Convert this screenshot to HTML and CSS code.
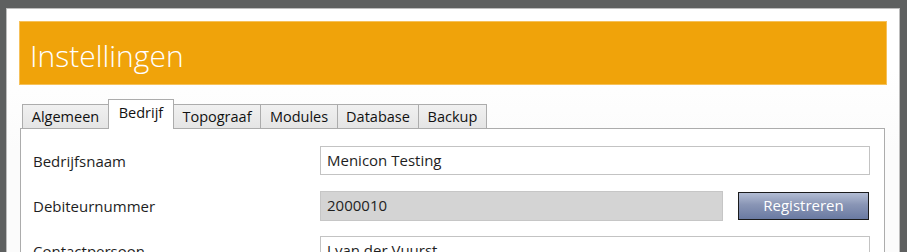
FILE: index.html
```html
<!DOCTYPE html>
<html>
<head>
<meta charset="utf-8">
<link rel="stylesheet" href="styles.css">
</head>
<body>
<div class="window">
  <div class="header">Instellingen</div>
  <div class="tabs">
    <div class="tab t1">Algemeen</div>
    <div class="tab t2 active">Bedrijf</div>
    <div class="tab t3">Topograaf</div>
    <div class="tab t4">Modules</div>
    <div class="tab t5">Database</div>
    <div class="tab t6">Backup</div>
  </div>
  <div class="panel">
    <div class="row">
      <div class="label">Bedrijfsnaam</div>
      <div class="field">Menicon Testing</div>
    </div>
    <div class="row">
      <div class="label">Debiteurnummer</div>
      <div class="field readonly">2000010</div>
      <div class="button">Registreren</div>
    </div>
    <div class="row">
      <div class="label">Contactpersoon</div>
      <div class="field">J van der Vuurst</div>
    </div>
  </div>
</div>
</body>
</html>
```
FILE: styles.css
```css
html, body {
  margin: 0;
  padding: 0;
  background: #5e6060;
  height: 252px;
  overflow: hidden;
}
body {
  font-family: "Open Sans", "Noto Sans", sans-serif;
  color: #1e1e1e;
}
.window {
  margin: 8px 0 0 6px;
  width: 868px;
  height: 400px;
  padding: 12px;
  background: linear-gradient(#ffffff 60px, #fbfbfb 140px);
  border: 1px solid #bdbdbd;
  border-bottom: none;
}
.header {
  height: 62px;
  overflow: hidden;
  background: #f0a30a;
  border: 1px solid #f6c15a;
  color: #fff;
  font-weight: 300;
  font-size: 30px;
  line-height: 68px;
  padding-left: 10px;
}
.tabs {
  display: flex;
  align-items: flex-end;
  margin-top: 14px;
  padding-left: 3px;
  height: 29px;
  position: relative;
  z-index: 1;
}
.tab {
  height: 24px;
  box-sizing: border-box;
  border: 1px solid #acacac;
  border-bottom: none;
  background: linear-gradient(#f0f0f0, #e5e5e5);
  font-size: 14.5px;
  line-height: 23px;
  text-align: center;
  margin-right: -1px;
  color: #111;
}
.tab.active {
  height: 30px;
  margin-bottom: -1px;
  background: #fff;
  line-height: 26px;
  position: relative;
}
.t1 { width: 87px; }
.t2 { width: 66px; }
.t3 { width: 88px; }
.t4 { width: 78px; }
.t5 { width: 82px; }
.t6 { width: 69px; }
.panel {
  margin-left: 1px;
  width: 865px;
  height: 200px;
  background: #fff;
  border: 1px solid #acacac;
  padding: 17px 0 0 12px;
  box-sizing: border-box;
}
.row {
  display: flex;
  align-items: center;
  height: 29px;
  margin-bottom: 16px;
}
.label {
  width: 287px;
  font-size: 15px;
}
.field {
  width: 550px;
  height: 29px;
  box-sizing: border-box;
  border: 1px solid #c3c3c3;
  font-size: 15px;
  line-height: 27px;
  padding-left: 6px;
}
.field.readonly {
  width: 403px;
  height: 30px;
  background: #d4d4d4;
  border-color: #c6c6c6;
}
.button {
  margin-left: 15px;
  width: 131px;
  height: 28px;
  box-sizing: border-box;
  border: 1px solid #1b1b1b;
  background: linear-gradient(#b3bdd4, #8995b5 45%, #6a7aa2);
  color: #fff;
  font-size: 15px;
  line-height: 25px;
  text-align: center;
}
```
